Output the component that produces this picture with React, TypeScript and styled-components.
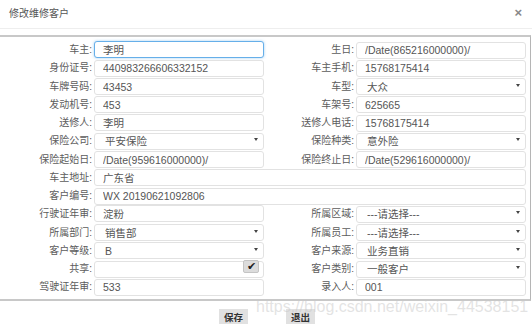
import styled, { createGlobalStyle } from 'styled-components';

const GlobalStyle = createGlobalStyle`
  html, body {
    margin: 0;
    padding: 0;
    background: #ffffff;
  }
  body {
    font-family: "Liberation Sans", "Noto Sans CJK SC", Arial, sans-serif;
    overflow: hidden;
  }
`;

type FieldKind = 'text' | 'select' | 'check';

interface FieldDef {
  label: string;
  value: string;
  kind?: FieldKind;
  full?: boolean;
  focused?: boolean;
}

const rows: FieldDef[][] = [
  [{ label: '车主:', value: '李明', focused: true }, { label: '生日:', value: '/Date(865216000000)/' }],
  [{ label: '身份证号:', value: '440983266606332152' }, { label: '车主手机:', value: '15768175414' }],
  [{ label: '车牌号码:', value: '43453' }, { label: '车型:', value: '大众', kind: 'select' }],
  [{ label: '发动机号:', value: '453' }, { label: '车架号:', value: '625665' }],
  [{ label: '送修人:', value: '李明' }, { label: '送修人电话:', value: '15768175414' }],
  [{ label: '保险公司:', value: '平安保险', kind: 'select' }, { label: '保险种类:', value: '意外险', kind: 'select' }],
  [{ label: '保险起始日:', value: '/Date(959616000000)/' }, { label: '保险终止日:', value: '/Date(529616000000)/' }],
  [{ label: '车主地址:', value: '广东省', full: true }],
  [{ label: '客户编号:', value: 'WX 20190621092806', full: true }],
  [{ label: '行驶证年审:', value: '淀粉' }, { label: '所属区域:', value: '---请选择---', kind: 'select' }],
  [{ label: '所属部门:', value: '销售部', kind: 'select' }, { label: '所属员工:', value: '---请选择---', kind: 'select' }],
  [{ label: '客户等级:', value: 'B', kind: 'select' }, { label: '客户来源:', value: '业务直销', kind: 'select' }],
  [{ label: '共享:', value: '', kind: 'check' }, { label: '客户类别:', value: '一般客户', kind: 'select' }],
  [{ label: '驾驶证年审:', value: '533' }, { label: '录入人:', value: '001' }],
];

const Dialog = styled.div`
  position: relative;
  width: 532px;
  height: 327px;
  overflow: hidden;
  color: #555;
`;

const Header = styled.div`
  height: 24px;
  display: flex;
  align-items: center;
  justify-content: space-between;
  padding: 0 10px 4px 9px;
  border-bottom: 1px solid #eeeeee;
`;

const Title = styled.h4`
  margin: 0;
  font-size: 10px;
  font-weight: normal;
  color: #555;
`;

const Close = styled.span`
  font-size: 13px;
  font-weight: bold;
  color: #888;
  line-height: 1;
`;

const Body = styled.div`
  margin-top: 6px;
  width: 530px;
  border-top: 2px solid #c8c8c8;
  border-right: 1px solid #b5b5b5;
  border-bottom: 2px solid #c8c8c8;
  padding: 3px 0 5px 0;
`;

const Grid = styled.div`
  display: grid;
  grid-template-columns: 94px 170px 92px 170px;
  grid-auto-rows: 17px;
  row-gap: 1.25px;
`;

const Label = styled.label`
  display: flex;
  align-items: center;
  justify-content: flex-end;
  padding-right: 2px;
  font-size: 10px;
  color: #5c5c5c;
  white-space: nowrap;
`;

const Control = styled.div<{ $full?: boolean }>`
  position: relative;
  grid-column: ${p => (p.$full ? '2 / 5' : 'auto')};
`;

const TextInput = styled.input<{ $focused?: boolean }>`
  box-sizing: border-box;
  width: 100%;
  height: 100%;
  margin: 0;
  padding: 0 0 0 8px;
  font-family: "Liberation Sans", "Noto Sans CJK SC", Arial, sans-serif;
  font-size: 10.5px;
  color: #555;
  background: #fff;
  border: 1px solid ${p => (p.$focused ? '#66afe9' : '#e2e2e2')};
  border-radius: 3px;
  box-shadow: ${p => (p.$focused ? '0 0 3px rgba(102, 175, 233, 0.6)' : 'none')};
  outline: none;
`;

const Select = styled.select`
  box-sizing: border-box;
  width: 100%;
  height: 100%;
  margin: 0;
  padding: 0 0 0 10px;
  appearance: none;
  font-family: "Liberation Sans", "Noto Sans CJK SC", Arial, sans-serif;
  font-size: 10.5px;
  color: #555;
  background: #fff;
  border: 1px solid #e2e2e2;
  border-radius: 3px;
  outline: none;
`;

const Caret = styled.span`
  position: absolute;
  right: 6px;
  top: 7px;
  width: 0;
  height: 0;
  border-left: 2px solid transparent;
  border-right: 2px solid transparent;
  border-top: 3px solid #444;
  pointer-events: none;
`;

const CheckButton = styled.span`
  position: absolute;
  right: 5px;
  top: 1px;
  width: 16px;
  height: 13px;
  display: flex;
  align-items: center;
  justify-content: center;
  background: #dcdcdc;
  border: 1px solid #c4c4c4;
  border-radius: 2px;
  box-sizing: border-box;
  font-size: 11px;
  color: #222;
`;

const Footer = styled.div`
  display: flex;
  justify-content: center;
  gap: 38px;
  padding-top: 8px;
  padding-left: 2px;
`;

const Button = styled.button`
  width: 29px;
  height: 15px;
  padding: 0;
  border: none;
  background: #e1e1e1;
  color: #333;
  font-family: "Liberation Sans", "Noto Sans CJK SC", Arial, sans-serif;
  font-size: 9.5px;
  font-weight: bold;
`;

const Watermark = styled.div`
  position: absolute;
  left: 256px;
  top: 298px;
  font-family: "Liberation Sans", Arial, sans-serif;
  font-size: 16px;
  color: rgba(200, 200, 200, 0.5);
  white-space: nowrap;
  pointer-events: none;
`;

function Field({ field }: { field: FieldDef }) {
  const kind = field.kind ?? 'text';
  return (
    <>
      <Label>{field.label}</Label>
      <Control $full={field.full}>
        {kind === 'text' && (
          <TextInput readOnly value={field.value} $focused={field.focused} />
        )}
        {kind === 'select' && (
          <>
            <Select value={field.value} onChange={() => {}}>
              <option value={field.value}>{field.value}</option>
            </Select>
            <Caret />
          </>
        )}
        {kind === 'check' && (
          <>
            <TextInput readOnly value="" />
            <CheckButton>✔</CheckButton>
          </>
        )}
      </Control>
    </>
  );
}

export default function App() {
  return (
    <>
      <GlobalStyle />
      <Dialog>
        <Header>
          <Title>修改维修客户</Title>
          <Close>×</Close>
        </Header>
        <Body>
          <Grid>
            {rows.map((row, i) =>
              row.map((field, j) => <Field key={`${i}-${j}`} field={field} />)
            )}
          </Grid>
        </Body>
        <Footer>
          <Button>保存</Button>
          <Button>退出</Button>
        </Footer>
        <Watermark>https://blog.csdn.net/weixin_44538151</Watermark>
      </Dialog>
    </>
  );
}
